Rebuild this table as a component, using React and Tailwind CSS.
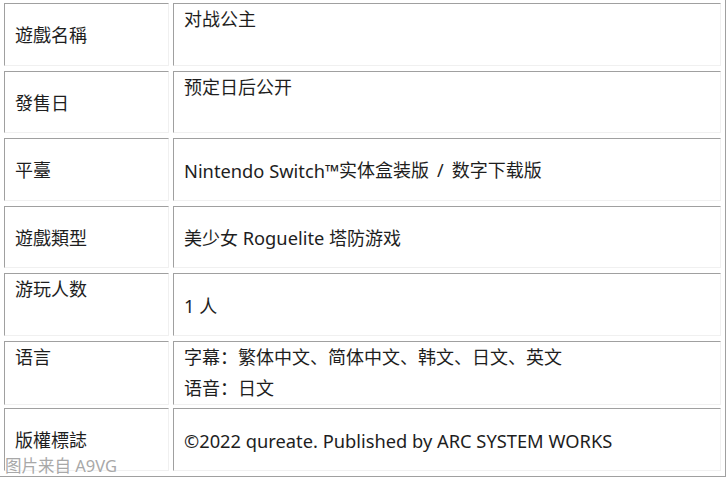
const rows = [
  { label: "遊戲名稱", value: ["对战公主"], labelAlign: "center", valueAlign: "top" },
  { label: "發售日", value: ["预定日后公开"], labelAlign: "center", valueAlign: "top" },
  { label: "平臺", value: ["Nintendo Switch™实体盒装版", "/", "数字下载版"], inline: true, labelAlign: "center", valueAlign: "center" },
  { label: "遊戲類型", value: ["美少女 Roguelite 塔防游戏"], labelAlign: "center", valueAlign: "center" },
  { label: "游玩人数", value: ["1 人"], labelAlign: "top", valueAlign: "center" },
  { label: "语言", value: ["字幕：繁体中文、简体中文、韩文、日文、英文", "语音：日文"], labelAlign: "top", valueAlign: "top" },
  { label: "版權標誌", value: ["©2022 qureate. Published by ARC SYSTEM WORKS"], labelAlign: "center", valueAlign: "center" },
];

// Latin runs are set a touch larger so they take the width of the original UI font
function Mixed({ text }) {
  const parts = text.split(/([A-Za-z0-9©™.][A-Za-z0-9©™. ]*)/);
  return parts.map((p, i) =>
    i % 2 === 1 ? (
      <span key={i} className="text-[18.3px]">{p}</span>
    ) : (
      <span key={i}>{p}</span>
    )
  );
}

function Cell({ align, children }) {
  // inset border like an old border="1" table
  return (
    <div
      className={
        "flex flex-col h-full border border-t-[#a0a0a0] border-l-[#a0a0a0] border-b-[#f0f0f0] border-r-[#f0f0f0] px-[10px] leading-[31px] " +
        (align === "top" ? "justify-start" : "justify-center pt-[3px]")
      }
    >
      {children}
    </div>
  );
}

export default function App() {
  return (
    <div className="relative w-[728px] h-[478px] bg-white overflow-hidden text-[#1e1e1e] text-[18px] font-['Noto_Sans','Noto_Sans_CJK_SC',sans-serif]">
      <div className="w-[726px] border-r border-b border-[#a0a0a0] pl-[4px] pr-[4px] pt-[3px] pb-[5px] flex flex-col gap-[5px]">
        {rows.map((row) => (
          <div key={row.label} className="grid grid-cols-[165px_548px] gap-x-[4px] h-[62.5px]">
            <Cell align={row.labelAlign}>{row.label}</Cell>
            <Cell align={row.valueAlign}>
              {row.inline ? (
                <div className="flex items-center whitespace-nowrap">
                  <Mixed text={row.value[0]} />
                  <span className="mx-[8px]">{row.value[1]}</span>
                  <span>{row.value[2]}</span>
                </div>
              ) : (
                row.value.map((line) => (
                  <div key={line} className="whitespace-nowrap">
                    <Mixed text={line} />
                  </div>
                ))
              )}
            </Cell>
          </div>
        ))}
      </div>

      {/* watermark */}
      <div className="absolute left-[5px] top-[457px] text-[16.5px] leading-[18px] text-[#a8a8a8] [text-shadow:0_0_2px_#fff,0_0_1px_#fff]">
        图片来自 A9VG
      </div>
    </div>
  );
}
